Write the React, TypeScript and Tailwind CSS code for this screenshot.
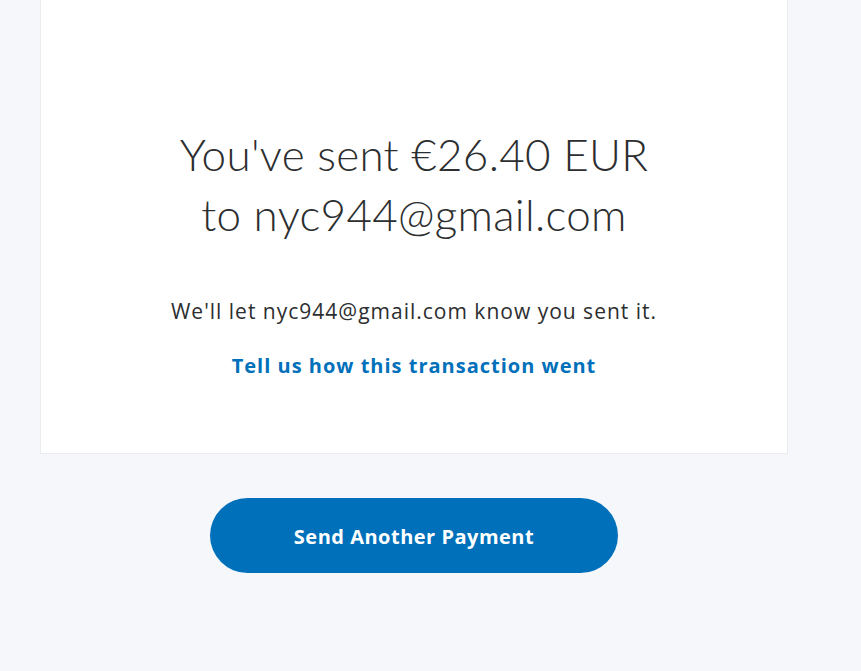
import React from 'react';

const App: React.FC = () => {
  return (
    <div className="min-h-[671px] w-full bg-[#f5f7fa] font-['Open_Sans',sans-serif] text-[#2c2e2f]">
      <div className="ml-[40px] w-[748px]">
        {/* Confirmation card */}
        <div className="flex h-[454px] flex-col items-center border border-t-0 border-[#eaeced] bg-white pt-[124px]">
          <h1 className="text-center font-['Lato',sans-serif] text-[44px] font-light leading-[60px] tracking-[0.3px]">
            You've sent €26.40 EUR
            <br />
            to nyc944@gmail.com
          </h1>
          <p className="mt-[53px] text-center text-[21px] leading-[28px] tracking-[1px]">
            We'll let nyc944@gmail.com know you sent it.
          </p>
          <a href="#" className="mt-[27px] text-[20px] font-bold leading-[28px] tracking-[1px] text-[#0070ba]">
            Tell us how this transaction went
          </a>
        </div>

        {/* Action */}
        <div className="mt-[44px] flex justify-center">
          <button className="h-[75px] w-[408px] rounded-full bg-[#0070ba] pt-[3px] text-[20px] font-bold tracking-[0.5px] text-white">
            Send Another Payment
          </button>
        </div>
      </div>
    </div>
  );
};

export default App;
